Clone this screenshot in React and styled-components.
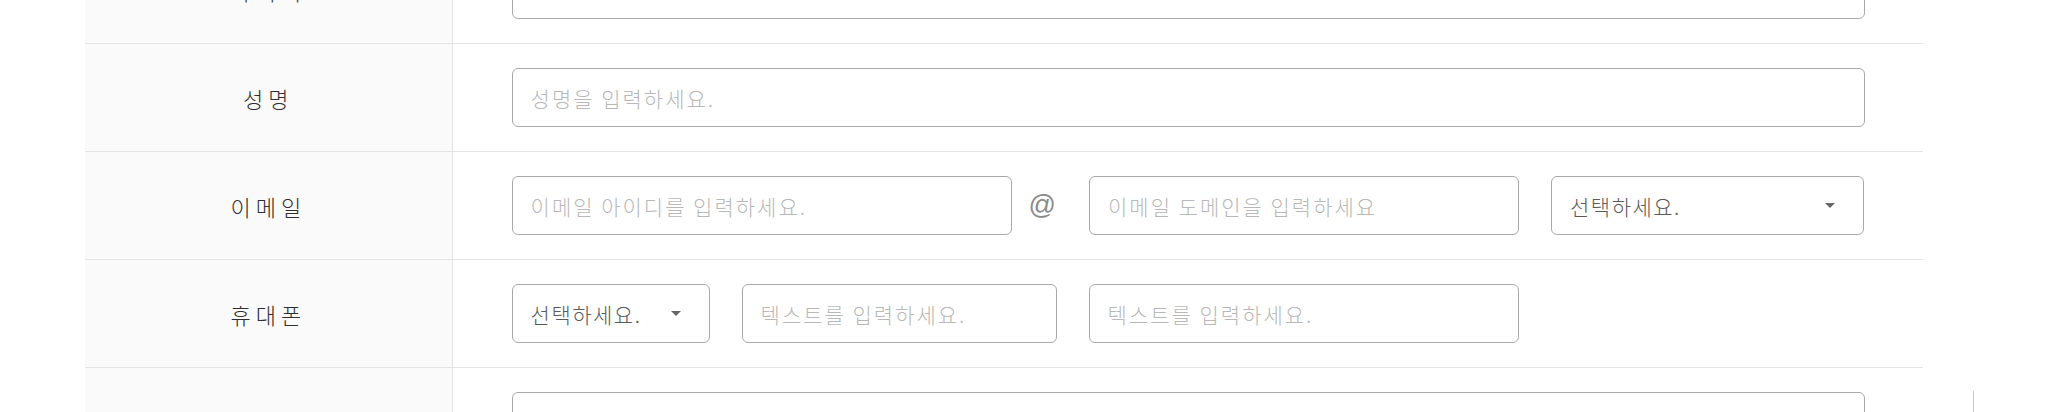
import React from 'react';
import styled, { createGlobalStyle } from 'styled-components';

const GlobalStyle = createGlobalStyle`
  body {
    margin: 0;
    padding: 0;
    background: #ffffff;
    font-family: "Noto Sans CJK KR", "Noto Sans", sans-serif;
  }
`;

const Page = styled.div`
  display: flex;
  height: 412px;
  padding-left: 85px;
  box-sizing: border-box;
  overflow: hidden;
`;

const FormTable = styled.div`
  flex: none;
  width: 1838px;
  margin-top: -64px;
`;

const Row = styled.div`
  display: grid;
  grid-template-columns: 20% 1fr;
  border-bottom: 1px solid #e4e4e4;
`;

const Label = styled.div`
  display: flex;
  align-items: center;
  justify-content: center;
  background: #fafafa;
  border-right: 1px solid #e4e4e4;
  font-size: 22px;
  font-weight: 300;
  letter-spacing: 5px;
  color: #2f2f2f;
`;

const Cell = styled.div`
  display: flex;
  align-items: center;
  gap: 32px;
  padding: 24px 58px 24px 59px;
`;

const TextInput = styled.input`
  box-sizing: border-box;
  flex: ${p => (p.$width ? 'none' : '1')};
  width: ${p => (p.$width ? `${p.$width}px` : 'auto')};
  height: 59px;
  padding: 0 18px;
  border: 1px solid #a9a9a9;
  border-radius: 6px;
  background: #fff;
  font-family: inherit;
  font-size: 21px;
  font-weight: 300;
  letter-spacing: 2px;
  color: #333;
  outline: none;

  &::placeholder {
    color: #b8b8b8;
  }
`;

const At = styled.span`
  flex: none;
  margin: 0 1px 0 -15px;
  font-family: "Liberation Sans", Arial, sans-serif;
  font-size: 27px;
  color: #8a8a8a;
`;

const SelectBox = styled.div`
  box-sizing: border-box;
  flex: none;
  width: ${p => p.$width}px;
  height: 59px;
  display: flex;
  align-items: center;
  justify-content: space-between;
  padding: 0 28px 0 18px;
  border: 1px solid #a9a9a9;
  border-radius: 6px;
  background: #fff;
  font-size: 21px;
  font-weight: 300;
  letter-spacing: 1.5px;
  color: #5a5a5a;
`;

const Caret = styled.span`
  width: 0;
  height: 0;
  border-left: 5px solid transparent;
  border-right: 5px solid transparent;
  border-top: 5px solid #666;
`;

const EdgeLine = styled.div`
  flex: none;
  align-self: flex-end;
  width: 1px;
  height: 21px;
  margin-left: 50px;
  background: #c8c8c8;
`;

const Select = ({ width }) => (
  <SelectBox $width={width}>
    <span>선택하세요.</span>
    <Caret />
  </SelectBox>
);

export default function App() {
  return (
    <Page>
      <GlobalStyle />
      <FormTable>
        <Row>
          <Label>아이디</Label>
          <Cell>
            <TextInput placeholder="" />
          </Cell>
        </Row>
        <Row>
          <Label>성명</Label>
          <Cell>
            <TextInput placeholder="성명을 입력하세요." />
          </Cell>
        </Row>
        <Row>
          <Label>이메일</Label>
          <Cell>
            <TextInput $width={500} placeholder="이메일 아이디를 입력하세요." />
            <At>@</At>
            <TextInput $width={430} placeholder="이메일 도메인을 입력하세요" />
            <Select width={313} />
          </Cell>
        </Row>
        <Row>
          <Label>휴대폰</Label>
          <Cell>
            <Select width={198} />
            <TextInput $width={315} placeholder="텍스트를 입력하세요." />
            <TextInput $width={430} placeholder="텍스트를 입력하세요." />
          </Cell>
        </Row>
        <Row>
          <Label>주소</Label>
          <Cell>
            <TextInput placeholder="" />
          </Cell>
        </Row>
      </FormTable>
      <EdgeLine />
    </Page>
  );
}
